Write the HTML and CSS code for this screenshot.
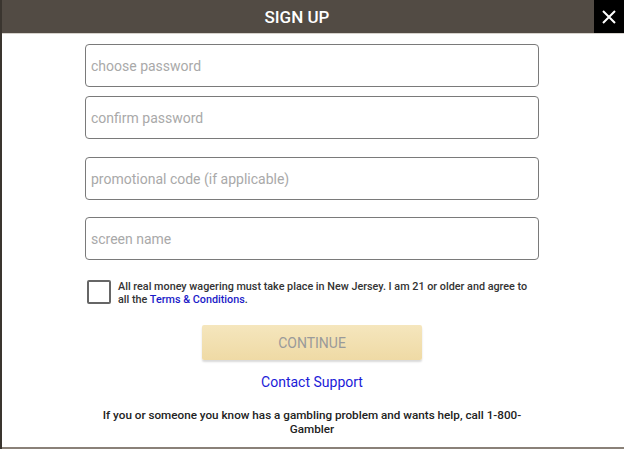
FILE: index.html
```html
<!DOCTYPE html>
<html lang="en">
<head>
  <meta charset="UTF-8" />
  <title>Sign Up</title>
  <link rel="stylesheet" href="styles.css">
</head>
<body>
  <div class="modal">
    <!-- Header -->
    <div class="modal-header">
      <h1 class="title">SIGN UP</h1>
      <button class="close-btn" aria-label="Close">
        <svg width="16" height="16" viewBox="0 0 16 16">
          <path d="M2 2 L14 14 M14 2 L2 14" stroke="#fff" stroke-width="2" fill="none"/>
        </svg>
      </button>
    </div>

    <form class="form">
      <div class="group">
        <input class="field" type="password" placeholder="choose password" />
        <input class="field" type="password" placeholder="confirm password" />
      </div>
      <input class="field" type="text" placeholder="promotional code (if applicable)" />
      <input class="field" type="text" placeholder="screen name" />

      <label class="agree">
        <span class="checkbox"></span>
        <span class="agree-text">All real money wagering must take place in New Jersey. I am 21 or older and agree to all the <a href="#">Terms &amp; Conditions</a>.</span>
      </label>

      <button type="button" class="continue-btn">CONTINUE</button>

      <a class="support" href="#">Contact Support</a>

      <p class="help">If you or someone you know has a gambling problem and wants help, call 1-800-Gambler</p>
    </form>
  </div>
</body>
</html>
```
FILE: styles.css
```css
* {
  box-sizing: border-box;
}

body {
  margin: 0;
  font-family: Roboto, 'Noto Sans', sans-serif;
  background-color: #3a352f;
}

.modal {
  width: 622px;
  height: 449px;
  margin-left: 2px;
  background-color: #fff;
  border-bottom: 2px solid #8a8178;
  overflow: hidden;
}

.modal-header {
  display: flex;
  height: 34px;
  border-bottom: 1px solid #d6d2cc;
  margin-left: -2px;
}

.title {
  flex: 1;
  margin: 0;
  background-color: #524b44;
  color: #fff;
  font-size: 17px;
  font-weight: 500;
  line-height: 34px;
  text-align: center;
}

.close-btn {
  width: 30px;
  border: none;
  padding: 0;
  background-color: #000;
  display: flex;
  align-items: center;
  justify-content: center;
  cursor: pointer;
}

.form {
  width: 454px;
  margin: 10px 0 0 83px;
  display: flex;
  flex-direction: column;
}

.group {
  display: flex;
  flex-direction: column;
  gap: 9px;
  margin-bottom: 18px;
}

.field {
  height: 43px;
  width: 100%;
  border: 1.5px solid #7a7a7a;
  border-radius: 4px;
  padding: 0 5px;
  font-family: inherit;
  font-size: 14px;
  color: #333;
}

.form > .field {
  margin-bottom: 17px;
}

.field::placeholder {
  color: #a9a9a9;
}

.agree {
  display: flex;
  align-items: flex-start;
  gap: 7px;
  margin: 3px 0 0 2px;
}

.checkbox {
  flex: none;
  width: 24px;
  height: 24px;
  border: 2px solid #666;
  border-radius: 2px;
}

.agree-text {
  font-size: 10.8px;
  font-weight: 500;
  line-height: 13px;
  color: #333;
}

.agree-text a {
  color: #1b1bc8;
  text-decoration: none;
}

.continue-btn {
  align-self: center;
  width: 220px;
  height: 35px;
  margin-top: 19px;
  border: none;
  border-radius: 2px;
  background: linear-gradient(#f5e6bd, #efdaa5);
  box-shadow: 0 2px 2px rgba(0, 0, 0, 0.15);
  color: #9a9a9a;
  font-family: inherit;
  font-size: 14px;
  font-weight: 400;
}

.support {
  align-self: center;
  margin-top: 14px;
  color: #1b1bd8;
  font-size: 14px;
  text-decoration: none;
}

.help {
  margin: 18px 0 0 0;
  text-align: center;
  font-size: 11.7px;
  font-weight: 500;
  line-height: 14px;
  color: #222;
}
```
